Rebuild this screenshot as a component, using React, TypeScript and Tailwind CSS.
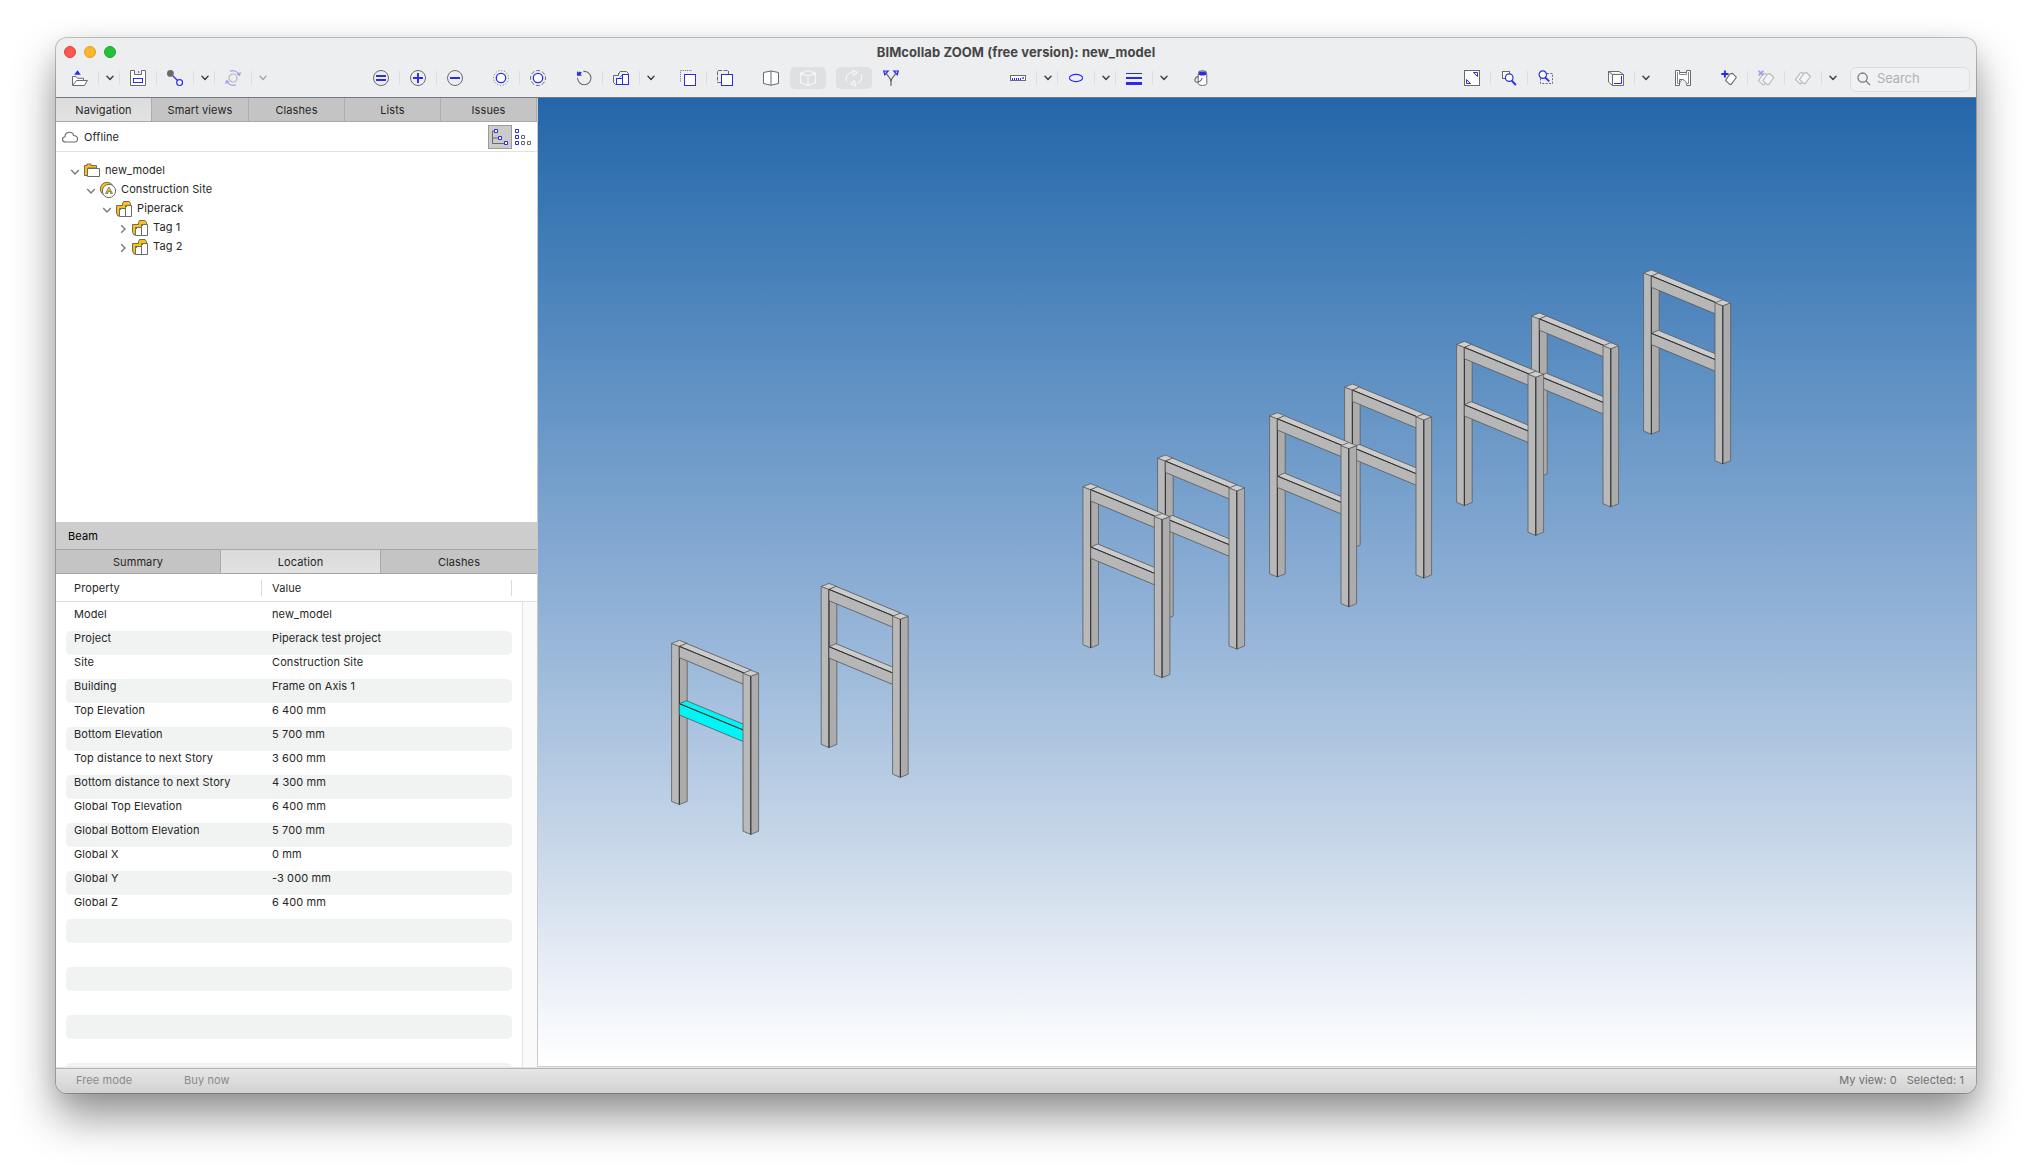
import React from "react";

const B = "#2b2bf0";
const G = "#6b6b6b";

type P = { children: React.ReactNode; className?: string };

const Svg = ({ children, className = "" }: P) => (
  <svg viewBox="0 0 16 16" className={`size-4 shrink-0 overflow-visible ${className}`} fill="none" strokeWidth="1">
    {children}
  </svg>
);

const Cell = ({ children, className = "" }: P) => (
  <div className={`flex h-[22px] w-9 shrink-0 items-center justify-center ${className}`}>{children}</div>
);

const Sep = () => <div className="h-3.5 w-px shrink-0 bg-[#dcdddf]" />;

const Chev = ({ faded = false }: { faded?: boolean }) => (
  <div className="flex w-5 shrink-0 items-center justify-center pl-px">
    <svg viewBox="0 0 8 6" className={`h-1.5 w-2 overflow-visible ${faded ? "opacity-40" : ""}`} fill="none" stroke="#444" strokeWidth="1.5" strokeLinecap="round" strokeLinejoin="round">
      <path d="M1 1.2 4 4.4 7 1.2" />
    </svg>
  </div>
);

const Group = ({ children, className = "" }: P) => (
  <div className={`flex shrink-0 items-center ${className}`}>{children}</div>
);

const TagShape = () => (
  <path d="M9.2 3.8 11.6 3.4 15.4 7.3 10.2 14.4 8.8 14.4 4.5 10.4Z" stroke={G} fill="#fff" strokeWidth="1.1" strokeLinejoin="round" />
);

function Toolbar() {
  return (
    <div className="flex h-7 items-center pl-1.5 pt-0">
      <Group>
        <Cell>
          <Svg>
            <path d="M2.2 4.7 5.5.2 8.8 4.7Z" fill={B} />
            <path d="M.5 15V6.5H4L5.5 8.3H11.5V10.5" stroke={G} fill="#fff" />
            <path d="M.6 15.5 4.5 10.5H15.4L12.4 15.5Z" stroke={G} fill="#fff" />
          </Svg>
        </Cell>
        <Sep />
        <Chev />
        <Sep />
        <Cell>
          <Svg>
            <path d="M.5.5H4.5V4.5H11.5V.5H15.5V15.5H.5Z" stroke={G} fill="#fff" />
            <path d="M8.7 1V3" stroke={G} />
            <rect x="3.5" y="8.5" width="9" height="4" stroke={B} />
          </Svg>
        </Cell>
        <Sep />
        <Cell>
          <Svg>
            <circle cx="3.4" cy="3.4" r="3.4" fill="#6b6b6b" />
            <path d="M6 6 10.5 10.5" stroke={B} strokeWidth="1.2" />
            <circle cx="12.6" cy="12.6" r="2.9" stroke={B} strokeWidth="1.2" fill="#fff" />
          </Svg>
        </Cell>
        <Sep />
        <Chev />
        <Sep />
        <Cell className="opacity-40">
          <Svg>
            <circle cx="8" cy="8" r="4" stroke={G} strokeWidth="1.2" />
            <path d="M5 1.2C9 -.3 12.5 1.5 14 5M11 14.8C7 16.3 3.5 14.5 2 11" stroke={B} strokeWidth="1.2" />
            <path d="M11.5 4.2 14.8 6.3 16 1.8ZM4.5 11.8 1.2 9.7 0 14.2Z" fill={B} />
          </Svg>
        </Cell>
        <Sep />
        <Chev faded />
      </Group>

      <Group className="ml-[91px]">
        <Cell><Svg><circle cx="8" cy="8" r="7.5" stroke={G} /><path d="M3 6H13M3 10H13" stroke={B} strokeWidth="1.9" /></Svg></Cell>
        <Sep />
        <Cell><Svg><circle cx="8" cy="8" r="7.5" stroke={G} /><path d="M3 8H13M8 3V13" stroke={B} strokeWidth="1.9" /></Svg></Cell>
        <Sep />
        <Cell><Svg><circle cx="8" cy="8" r="7.5" stroke={G} /><path d="M3 8H13" stroke={B} strokeWidth="1.9" /></Svg></Cell>
      </Group>

      <Group className="ml-2.5">
        <Cell><Svg><circle cx="8" cy="8" r="7.5" stroke={G} strokeDasharray="1 1.945" /><circle cx="8" cy="8" r="4.7" stroke={B} strokeWidth="1.3" fill="#fff" /></Svg></Cell>
        <Sep />
        <Cell><Svg><circle cx="8" cy="8" r="7.5" stroke={G} strokeDasharray="4 1.89" strokeDashoffset="2" /><circle cx="8" cy="8" r="4.7" stroke={B} strokeWidth="1.3" fill="#fff" /></Svg></Cell>
      </Group>

      <Group className="ml-2.5">
        <Cell>
          <Svg>
            <path d="M7.4 1.4A6.7 6.7 0 1 1 1.6 7.6" stroke={G} strokeWidth="1.1" />
            <path d="M1 1V5.8H6L4.6 4.2 5.8 2.6 3.8 1.4 2.4 2.6Z" fill={B} />
          </Svg>
        </Cell>
        <Sep />
        <Cell>
          <Svg>
            <path d="M.5 12.5V5.5H5L7 1.5H13.5L15.5 3.5V6M5 5.5H5.5V3M.5 12.5 2.5 14.5H4M7 7.5 9 5" stroke={G} />
            <rect x="3.5" y="8.5" width="6" height="6" stroke={B} fill="#fff" />
            <rect x="9.5" y="4.5" width="6" height="10" stroke={B} fill="#fff" />
          </Svg>
        </Cell>
        <Sep />
        <Chev />
      </Group>

      <Group className="ml-2.5">
        <Cell><Svg><path d="M.5 11.5V.5H12" stroke={G} strokeDasharray="1 1.2" /><rect x="4.5" y="4.5" width="11" height="11" stroke={B} fill="#fff" /></Svg></Cell>
        <Sep />
        <Cell><Svg><path d="M4 12.5H.5V.5H11.5V4" stroke={G} strokeDasharray="4 1.4" /><rect x="4.5" y="4.5" width="11" height="11" stroke={B} fill="#fff" /></Svg></Cell>
      </Group>

      <Group className="ml-2.5">
        <Cell><Svg><path d="M8 1 15.5 2.5V13.5L8 15.2.5 13.5V2.5ZM8 1V15.2" stroke={G} fill="#fff" /></Svg></Cell>
        <Cell className="ml-px rounded-[5px] bg-[#dfe0e2]">
          <Svg><path d="M8 .6 15.5 3.2V12.5L8 15.4.5 12.5V3.2ZM.5 3.2 8 6 15.5 3.2M8 6V15.4" stroke="#f7f7f8" strokeWidth="1.1" /></Svg>
        </Cell>
        <Cell className="ml-2.5 rounded-[5px] bg-[#dfe0e2]">
          <Svg>
            <path d="M.6 11.5C-1 7 2 2.5 6.5 2.2M15.4 4.5C17 9 14 13.5 9.5 13.8" stroke="#f7f7f8" strokeWidth="1.1" />
            <path d="M6.5.2 11 2.2 7.5 5.5ZM9.5 15.8 5 13.8 8.5 10.5Z" stroke="#f7f7f8" strokeWidth="1.1" />
          </Svg>
        </Cell>
        <Cell className="ml-px">
          <Svg>
            <path d="M8 15.8V12C8 8 5.5 6.5 3.5 4M8 12C8 8 10.5 6.5 12.5 4" stroke={G} strokeWidth="1.3" />
            <path d="M.7 1H5.2L1.8 4.8ZM15.3 1H10.8L14.2 4.8Z" stroke={B} strokeWidth="1.2" fill="#c5c5fb" />
          </Svg>
        </Cell>
      </Group>

      <Group className="ml-[91px]">
        <Cell><Svg><rect x=".5" y="5.5" width="15" height="5" stroke={G} fill="#fff" /><path d="M2.5 8V10M4.5 8V10M6.5 8V10M8.5 8V10M10.5 8V10" stroke={B} /><rect x="12.3" y="7.2" width="1.6" height="1.6" fill={B} /></Svg></Cell>
        <Sep />
        <Chev />
        <Sep />
        <Cell><Svg><ellipse cx="8" cy="8" rx="6.6" ry="3.6" stroke={B} strokeWidth="1.1" /></Svg></Cell>
        <Sep />
        <Chev />
        <Sep />
        <Cell><Svg><path d="M0 3.5H16" stroke={B} /><path d="M0 8H16" stroke={B} strokeWidth="2" /><path d="M0 13.5H16" stroke={B} strokeWidth="3" /></Svg></Cell>
        <Sep />
        <Chev />
      </Group>

      <Group className="ml-2.5">
        <Cell>
          <Svg className="translate-x-px">
            <path d="M4.2 4V13.8C5.5 16 11.5 16 12.8 13.8V4" stroke={G} fill="#fff" />
            <ellipse cx="8.5" cy="3.4" rx="4.2" ry="2" fill={B} />
            <path d="M4.5 2.8C5 .1 12 .1 12.5 2.8M4.2 6.2C-.5 8 .5 12.5 3 12.3 5 12 7.5 10.5 8.2 7.8" stroke={G} strokeWidth="1.1" />
          </Svg>
        </Cell>
      </Group>

      <Group className="ml-[235px]">
        <Cell>
          <Svg>
            <rect x=".5" y=".5" width="15" height="15" stroke={G} fill="#fff" />
            <path d="M9.5 2.5H13.5V6.5ZM2.5 9.5V13.5H6.5Z" stroke={B} />
          </Svg>
        </Cell>
        <Sep />
        <Cell>
          <Svg>
            <rect x="1.5" y="1.5" width="7" height="7" stroke={G} fill="#fff" />
            <circle cx="8.2" cy="7.6" r="3.8" stroke={B} strokeWidth="1.2" fill="#fff" />
            <path d="M10.8 10.6 14.8 15" stroke={B} strokeWidth="1.9" />
          </Svg>
        </Cell>
        <Sep />
        <Cell>
          <Svg>
            <path d="M9 3.5H14.5V13.5H2.5V8" stroke={G} strokeDasharray="2 1.4" />
            <circle cx="4.8" cy="4.6" r="3.7" stroke={B} strokeWidth="1.2" fill="#fff" />
            <path d="M7.4 7.6 11.2 11.4" stroke={B} strokeWidth="1.9" />
          </Svg>
        </Cell>
      </Group>

      <Group className="ml-[34px]">
        <Cell>
          <Svg>
            <path d="M4.5 4.5H15.5V15.5H4.5ZM.5 1.5H11L15.5 4.5M.5 1.5 4.5 4.5M.5 1.5V12L4.5 15.5" stroke={G} fill="#fff" />
            <path d="M4.5 4.5V15.5" stroke={G} />
            <path d="M6 13.5H13.5V6" stroke={B} />
          </Svg>
        </Cell>
        <Sep />
        <Chev />
      </Group>

      <Group className="ml-2.5">
        <Cell>
          <Svg>
            <path d="M.5.5H4.5V2.5H11.5V.5H15.5V15.5H11.5C11.5 12.5 11 10.5 7.5 9.5H4.5V15.5H.5Z" stroke={G} fill="#fff" />
            <path d="M2.5 2V13.5H4M4.5 2.5V4.5H11.5V2.5M13.5 2V13.5H12M7.5 9.5C6 10.5 5.5 11.5 4.5 13" stroke={G} strokeWidth=".8" />
          </Svg>
        </Cell>
      </Group>

      <Group className="ml-2.5">
        <Cell>
          <Svg>
            <TagShape />
            <path d="M.3 4H7.5M3.9.4V7.6" stroke={B} strokeWidth="1.9" />
          </Svg>
        </Cell>
        <Sep />
        <Cell className="opacity-40">
          <Svg>
            <g transform="translate(-4 .2)"><TagShape /></g>
            <g transform="translate(.4 .2)"><TagShape /></g>
            <path d="M.6.8 5.4 5.4M5.4.8.6 5.4" stroke={B} strokeWidth="1.8" />
          </Svg>
        </Cell>
        <Sep />
        <Cell className="opacity-40">
          <Svg>
            <g transform="translate(-4 -.8)"><TagShape /></g>
            <g transform="translate(0 -.8)"><TagShape /></g>
          </Svg>
        </Cell>
        <Sep />
        <Chev />
      </Group>

      <div className="ml-2 flex h-[25px] w-[120px] shrink-0 items-center rounded-md border border-[#dddee0] bg-[#f0f1f3] pl-1.5 mt-0.5">
        <svg viewBox="0 0 14 14" className="size-3.5" fill="none" stroke="#7c7c7e" strokeWidth="1.3">
          <circle cx="5.6" cy="5.6" r="4.6" />
          <path d="M9 9 13 13" />
        </svg>
        <span className="ml-[6px] text-[13px] tracking-[-0.1px] text-[#b1b2b4]">Search</span>
      </div>
    </div>
  );
}

const navTabs: [string, string][] = [
  ["Navigation", "w-[95px] bg-gradient-to-b from-[#dcdcdc] to-[#e2e2e2]"],
  ["Smart views", "w-[97px] bg-[#c4c4c4] border-l border-[#adadad]"],
  ["Clashes", "w-24 bg-[#c4c4c4] border-l border-[#adadad]"],
  ["Lists", "w-24 bg-[#c4c4c4] border-l border-[#adadad]"],
  ["Issues", "flex-1 bg-[#c4c4c4] border-x border-[#adadad]"],
];

const TreeChev = ({ open = true }: { open?: boolean }) => (
  <svg viewBox="0 0 10 10" className="mt-0.5 size-2.5 shrink-0" fill="none" stroke="#7a7a7a" strokeWidth="1.4">
    {open ? <path d="M1.2 3 5 7 8.8 3" /> : <path d="M3.2 1.2 7 5 3.2 8.8" />}
  </svg>
);

const FolderIcon = () => (
  <Svg>
    <path d="M.5 12.5V2.5H3V1H7V2.5H12.5V5H3.5V12.5Z" fill="#fdc10a" stroke={G} />
    <path d="M3.5 5.5H15.5V13.5H3.5Z" fill="#fff" stroke={G} />
  </Svg>
);
const SiteIcon = () => (
  <Svg>
    <circle cx="7" cy="7" r="6.7" fill="#fdc10a" stroke={G} />
    <circle cx="9" cy="9" r="6.6" fill="#fff" stroke={G} />
    <path d="M5.5 11.5 9 5 12.5 11.5H10.5V9.5H8V11.5Z" fill="#fdc10a" stroke={G} strokeWidth=".8" />
  </Svg>
);
const BuildingIcon = () => (
  <Svg>
    <path d="M.5 12V4.5H6.5V2.5L7.5.5H13L14.5 2.5V4.5H9.5V7.5H3.5V15H2Z" fill="#fdc10a" stroke={G} />
    <path d="M3.5 15.5V9.5L5.5 7.5H9.5V15.5Z" fill="#fff" stroke={G} />
    <path d="M9.5 15.5V6.5L11.5 4.5H15.5V15.5Z" fill="#fff" stroke={G} />
  </Svg>
);

const tree = [
  { label: "new_model", pad: "pl-[14px]", icon: <FolderIcon />, open: true },
  { label: "Construction Site", pad: "pl-[30px]", icon: <SiteIcon />, open: true },
  { label: "Piperack", pad: "pl-[46px]", icon: <BuildingIcon />, open: true },
  { label: "Tag 1", pad: "pl-[62px]", icon: <BuildingIcon />, open: false },
  { label: "Tag 2", pad: "pl-[62px]", icon: <BuildingIcon />, open: false },
];

const rows: [string, string][] = [
  ["Model", "new_model"],
  ["Project", "Piperack test project"],
  ["Site", "Construction Site"],
  ["Building", "Frame on Axis 1"],
  ["Top Elevation", "6 400 mm"],
  ["Bottom Elevation", "5 700 mm"],
  ["Top distance to next Story", "3 600 mm"],
  ["Bottom distance to next Story", "4 300 mm"],
  ["Global Top Elevation", "6 400 mm"],
  ["Global Bottom Elevation", "5 700 mm"],
  ["Global X", "0 mm"],
  ["Global Y", "-3 000 mm"],
  ["Global Z", "6 400 mm"],
  ["", ""],
  ["", ""],
  ["", ""],
  ["", ""],
  ["", ""],
  ["", ""],
  ["", ""],
];

function SidePanel() {
  return (
    <div className="flex w-[482px] shrink-0 flex-col border-r border-[#c9c9c9] bg-white text-[11px] tracking-[0.1px] text-[#262626]">
      <div className="flex h-6 shrink-0 border-b border-[#a9a9a9]">
        {navTabs.map(([t, c]) => (
          <div key={t} className={`flex items-center justify-center pt-0.5 ${c}`}>{t}</div>
        ))}
      </div>
      <div className="flex h-[30px] shrink-0 items-center border-b border-[#e2e2e2] pl-1.5">
        <Svg>
          <path d="M3.5 13C-.2 13-.5 8.3 3 7.8 3 2.5 10.5 1.5 11.5 6.5 16.8 6.5 16.5 13 13 13Z" stroke={G} strokeWidth="1.1" />
        </Svg>
        <span className="ml-1.5 grow pt-0.5">Offline</span>
        <div className="flex size-6 items-center justify-center border border-[#9b9b9b] bg-[#cbcbcb]">
          <Svg>
            <path d="M2.5 2H.5V14.5H12M.5 9H6" stroke={G} />
            <path d="M2.5.5H5.5V3.5H2.5ZM6.5 7.5H9.5V10.5H6.5ZM12.5 12.5H15.5V15.5H12.5Z" stroke={B} fill="#fff" />
          </Svg>
        </div>
        <Svg className="ml-[3px] mr-1.5">
          <path d="M.5.5H3.5V3.5H.5ZM.5 6.5H3.5V9.5H.5ZM.5 12.5H3.5V15.5H.5Z" stroke={B} />
          <path d="M6.5 6.5H9.5V9.5H6.5ZM6.5 12.5H9.5V15.5H6.5ZM12.5 12.5H15.5V15.5H12.5Z" stroke={G} />
        </Svg>
      </div>
      <div className="h-[370px] shrink-0 pt-[9px]">
        {tree.map((n) => (
          <div key={n.label} className={`flex h-[19px] items-center ${n.pad}`}>
            <TreeChev open={n.open} />
            <span className="ml-1">{n.icon}</span>
            <span className="ml-[5px]">{n.label}</span>
          </div>
        ))}
      </div>

      <div className="flex h-7 shrink-0 items-center border-b border-[#a6a6a6] bg-[#cdcdcd] pl-3 pt-0.5 text-black">Beam</div>
      <div className="flex h-6 shrink-0 border-b border-[#a6a6a6]">
        <div className="flex w-[164px] items-center justify-center bg-[#c4c4c4] pt-0.5">Summary</div>
        <div className="flex w-[161px] items-center justify-center border-x border-[#ababab] bg-gradient-to-b from-[#dadada] to-[#e2e2e2] pt-0.5">Location</div>
        <div className="flex grow items-center justify-center bg-[#c4c4c4] pt-0.5">Clashes</div>
      </div>
      <div className="flex h-7 shrink-0 items-center border-b border-[#dedede] pl-[18px]">
        <span className="w-[187px] pt-0.5">Property</span>
        <span className="flex h-4 w-[251px] items-center border-x border-[#dcdcdc] pl-2.5 pt-0.5">Value</span>
      </div>
      <div className="flex min-h-0 grow">
        <div className="h-full w-[466px] overflow-hidden pl-2.5 pt-[5px]">
          {rows.map(([k, v], i) => (
            <div key={i} className="flex h-6 w-[446px] rounded-[5px] pl-2 leading-[14px] even:bg-[#f1f3f2]">
              <span className="w-[198px]">{k}</span>
              <span>{v}</span>
            </div>
          ))}
        </div>
        <div className="grow border-l border-[#e2e2e2] bg-[#fafafa]" />
      </div>
    </div>
  );
}

const frames: [number, number][] = [
  [972, -370.4],
  [860, -327.5],
  [785, -299],
  [673, -256.3],
  [598, -227.6],
  [486, -185.3],
  [411.3, -156.7],
  [149.6, -57],
  [0, 0],
];

const Column = () => (
  <g stroke="#5c5c5c" strokeWidth=".8" strokeLinejoin="round">
    <path d="M-7.8-3 0 0V158.2L-7.8 155Z" fill="#b9b9b9" />
    <path d="M0 0 7.8-3V155L0 158.2Z" fill="#acacac" />
    <path d="M-7.8-3 0-6 7.8-3 0 0Z" fill="#cfcfcf" />
    <path d="M0 0V158.2" stroke="#333" strokeWidth="1" />
  </g>
);

const Beam = ({ fill, top }: { fill: string; top: string }) => (
  <g stroke="#555" strokeWidth=".8">
    <path d="M0 0 7-3 72 23.8 65 26.8Z" fill={top} />
    <path d="M0 0 65 26.8V38.3L0 11.3Z" fill={fill} />
    <path d="M0 0 65 26.8" stroke="#333" strokeWidth="1" />
  </g>
);

function Viewport() {
  return (
    <div className="min-w-0 grow border-b border-[#d0d0d0] bg-[linear-gradient(to_bottom,#2466a9_0%,#3f7bb6_14%,#6796c6_33%,#8fb0d6_52%,#adc5e0_66%,#ccdaea_79%,#e8eef6_90%,#ffffff_100%)]">
      <svg viewBox="538 98 1438 968" className="block h-full w-full">
        {frames.map(([x, y]) => (
          <g key={x} transform={`translate(${679.4 + x} ${646.4 + y})`}>
            <Column />
            <Beam fill="#b7b7b7" top="#cccccc" />
            <g transform="translate(0 57.3)">
              {x === 0 ? <Beam fill="#00f6f6" top="#00f6f6" /> : <Beam fill="#b7b7b7" top="#cccccc" />}
            </g>
            <g transform="translate(71.4 29.8)">
              <Column />
            </g>
          </g>
        ))}
      </svg>
    </div>
  );
}

export default function App() {
  return (
    <div className="h-[1167px] w-[2032px] overflow-hidden bg-white pl-14 pt-[38px] font-['Inter',sans-serif]">
      <div className="flex h-[1055px] w-[1920px] flex-col overflow-hidden rounded-[11px] bg-[#edeef0] shadow-[0_0_0_1px_rgba(0,0,0,0.22),0_24px_44px_rgba(0,0,0,0.42),0_4px_22px_rgba(0,0,0,0.08)]">
        <div className="h-[59px] shrink-0">
          <div className="relative flex h-[26px] items-center justify-center">
            <div className="absolute left-2 top-2 flex gap-2">
              <div className="size-3 rounded-full border border-[#e0443e] bg-[#ff5650]" />
              <div className="size-3 rounded-full border border-[#dea123] bg-[#fdb52a]" />
              <div className="size-3 rounded-full border border-[#1aab29] bg-[#24c138]" />
            </div>
            <h1 className="pt-[3px] text-[13px] font-bold tracking-[0.08px] text-[#454545]">BIMcollab ZOOM (free version): new_model</h1>
          </div>
          <Toolbar />
        </div>
        <div className="flex min-h-0 grow border-t border-[#6f7a86]">
          <SidePanel />
          <Viewport />
        </div>
        <div className="h-px shrink-0 bg-[#e6e6e6]" />
        <div className="flex h-[25px] shrink-0 items-center border-t border-[#b4b4b4] bg-gradient-to-b from-[#e6e6e6] to-[#d2d2d2] pb-0.5 pl-5 pr-3 text-[11px] tracking-[0.1px]">
          <span className="w-[108px] text-[#8a8a8a]">Free mode</span>
          <span className="grow text-[#8a8a8a]">Buy now</span>
          <span className="mr-2.5 text-[#707070]">My view: 0</span>
          <span className="text-[#707070]">Selected: 1</span>
        </div>
      </div>
    </div>
  );
}
